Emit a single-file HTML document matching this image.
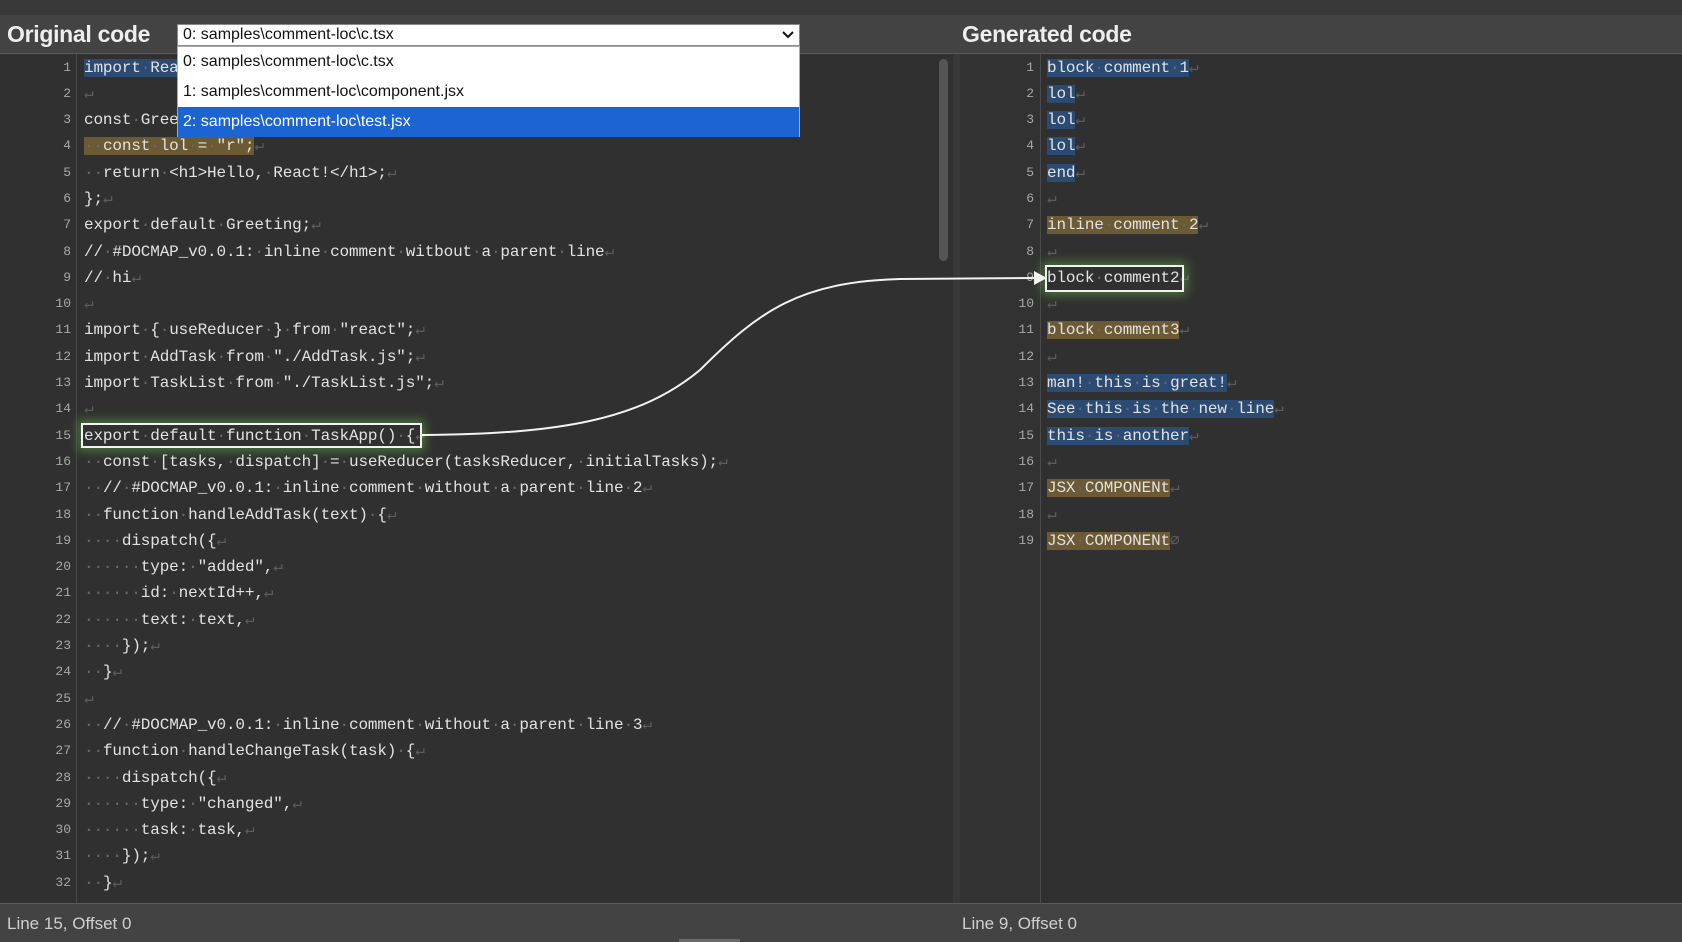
<!DOCTYPE html>
<html><head><meta charset="utf-8">
<style>
*{margin:0;padding:0;box-sizing:border-box}
body{width:1682px;height:942px;background:#303030;overflow:hidden;position:relative;font-family:"Liberation Sans",sans-serif}
.top{position:absolute;left:0;top:0;width:1682px;height:15px;background:#393939}
.hdr{position:absolute;left:0;top:15px;width:1682px;height:39px;background:#434343;border-bottom:1px solid #5a5a5a}
.title{position:absolute;top:21px;font-size:23px;font-weight:bold;color:#eee;letter-spacing:-0.3px}
.pane{position:absolute;top:54px;height:849px;background:#303030}
.gut{position:absolute;top:0;height:849px;border-right:1px solid #4a4a4a}
.code{position:absolute;top:0.5px;font-family:"Liberation Mono",monospace;font-size:16px;letter-spacing:-0.14px;line-height:26.3px;color:#e2e2e2;white-space:pre}
.nums{position:absolute;top:0.5px;font-family:"Liberation Mono",monospace;font-size:13px;line-height:26.3px;color:#a8a8a8;text-align:right;white-space:pre}
i{font-style:normal;color:#6a6a6a}
b{font-weight:normal;color:#5c5c5c}
.bl{background:#2b4b72}
.br{background:#6b5a33}
.box{position:absolute;border:2px solid #f2f2f2;box-shadow:0 0 10px 3px rgba(110,200,80,0.45)}
.status{position:absolute;left:0;top:903px;width:1682px;height:39px;background:#434343;border-top:1px solid #5a5a5a;font-size:17px;color:#cfcfcf}
.sel{position:absolute;left:177px;top:24px;width:623px;height:22px;background:#fff;border:1px solid #888;font-size:16px;color:#111;padding:0 5px;line-height:20px}
.opts{position:absolute;left:177px;top:46px;width:623px;height:91px;background:#fff;border:1px solid #aaa;font-size:16px;color:#111}
.opts div{height:30px;line-height:30px;padding-left:5px}
.opts .on{background:#1b64d1;color:#fff}
</style></head><body>
<div class="top"></div>
<div class="hdr"></div>
<div class="title" style="left:7px">Original code</div>
<div class="title" style="left:962px">Generated code</div>

<div class="pane" style="left:0;width:953px">
<div class="gut" style="left:0;width:77px"></div>
<div class="nums" style="left:0;width:71px">1
2
3
4
5
6
7
8
9
10
11
12
13
14
15
16
17
18
19
20
21
22
23
24
25
26
27
28
29
30
31
32</div>
<div class="code" style="left:84px"><span class="bl">import<i>·</i>React<i>·</i>from<i>·</i>"react";</span><b>↵</b>
<b>↵</b>
const<i>·</i>Greeting<i>·</i>=<i>·</i>()<i>·</i>=&gt;<i>·</i>{<b>↵</b>
<span class="br"><i>··</i>const<i>·</i>lol<i>·</i>=<i>·</i>"r";</span><b>↵</b>
<i>··</i>return<i>·</i>&lt;h1&gt;Hello,<i>·</i>React!&lt;/h1&gt;;<b>↵</b>
};<b>↵</b>
export<i>·</i>default<i>·</i>Greeting;<b>↵</b>
//<i>·</i>#DOCMAP_v0.0.1:<i>·</i>inline<i>·</i>comment<i>·</i>witbout<i>·</i>a<i>·</i>parent<i>·</i>line<b>↵</b>
//<i>·</i>hi<b>↵</b>
<b>↵</b>
import<i>·</i>{<i>·</i>useReducer<i>·</i>}<i>·</i>from<i>·</i>"react";<b>↵</b>
import<i>·</i>AddTask<i>·</i>from<i>·</i>"./AddTask.js";<b>↵</b>
import<i>·</i>TaskList<i>·</i>from<i>·</i>"./TaskList.js";<b>↵</b>
<b>↵</b>
export<i>·</i>default<i>·</i>function<i>·</i>TaskApp()<i>·</i>{<b>↵</b>
<i>··</i>const<i>·</i>[tasks,<i>·</i>dispatch]<i>·</i>=<i>·</i>useReducer(tasksReducer,<i>·</i>initialTasks);<b>↵</b>
<i>··</i>//<i>·</i>#DOCMAP_v0.0.1:<i>·</i>inline<i>·</i>comment<i>·</i>without<i>·</i>a<i>·</i>parent<i>·</i>line<i>·</i>2<b>↵</b>
<i>··</i>function<i>·</i>handleAddTask(text)<i>·</i>{<b>↵</b>
<i>····</i>dispatch({<b>↵</b>
<i>······</i>type:<i>·</i>"added",<b>↵</b>
<i>······</i>id:<i>·</i>nextId++,<b>↵</b>
<i>······</i>text:<i>·</i>text,<b>↵</b>
<i>····</i>});<b>↵</b>
<i>··</i>}<b>↵</b>
<b>↵</b>
<i>··</i>//<i>·</i>#DOCMAP_v0.0.1:<i>·</i>inline<i>·</i>comment<i>·</i>without<i>·</i>a<i>·</i>parent<i>·</i>line<i>·</i>3<b>↵</b>
<i>··</i>function<i>·</i>handleChangeTask(task)<i>·</i>{<b>↵</b>
<i>····</i>dispatch({<b>↵</b>
<i>······</i>type:<i>·</i>"changed",<b>↵</b>
<i>······</i>task:<i>·</i>task,<b>↵</b>
<i>····</i>});<b>↵</b>
<i>··</i>}<b>↵</b></div>
<div style="position:absolute;left:939px;top:5px;width:9px;height:202px;background:#555;border-radius:5px"></div>
</div>

<div class="pane" style="left:953px;width:729px">
<div style="position:absolute;left:0;top:0;width:7px;height:849px;background:#383838"></div>
<div class="gut" style="left:7px;width:81px;background:#323232"></div>
<div class="nums" style="left:7px;width:74px">1
2
3
4
5
6
7
8
9
10
11
12
13
14
15
16
17
18
19</div>
<div class="code" style="left:94px"><span class="bl">block<i>·</i>comment<i>·</i>1</span><b>↵</b>
<span class="bl">lol</span><b>↵</b>
<span class="bl">lol</span><b>↵</b>
<span class="bl">lol</span><b>↵</b>
<span class="bl">end</span><b>↵</b>
<b>↵</b>
<span class="br">inline<i>·</i>comment<i>·</i>2</span><b>↵</b>
<b>↵</b>
block<i>·</i>comment2<b>↵</b>
<b>↵</b>
<span class="br">block<i>·</i>comment3</span><b>↵</b>
<b>↵</b>
<span class="bl">man!<i>·</i>this<i>·</i>is<i>·</i>great!</span><b>↵</b>
<span class="bl">See<i>·</i>this<i>·</i>is<i>·</i>the<i>·</i>new<i>·</i>line</span><b>↵</b>
<span class="bl">this<i>·</i>is<i>·</i>another</span><b>↵</b>
<b>↵</b>
<span class="br">JSX<i>·</i>COMPONENt</span><b>↵</b>
<b>↵</b>
<span class="br">JSX<i>·</i>COMPONENt</span><b>∅</b></div>
</div>

<div class="box" style="left:81px;top:423px;width:341px;height:25px"></div>
<div class="box" style="left:1045px;top:265px;width:139px;height:27px"></div>

<svg style="position:absolute;left:0;top:0" width="1682" height="942">
<path d="M422 435 C 560 434, 640 420, 700 370 C 760 310, 800 282, 900 279 L 1036 278" fill="none" stroke="#f2f2f2" stroke-width="2"/>
<path d="M1034 271 L1047 278 L1034 285 Z" fill="#f2f2f2"/>
</svg>

<div class="sel">0: samples\comment-loc\c.tsx<svg style="position:absolute;right:5px;top:5px" width="12" height="10"><path d="M1 2 L6 7 L11 2" fill="none" stroke="#111" stroke-width="2"/></svg></div>
<div class="opts">
<div>0: samples\comment-loc\c.tsx</div>
<div>1: samples\comment-loc\component.jsx</div>
<div class="on">2: samples\comment-loc\test.jsx</div>
</div>

<div class="status"><span style="position:absolute;left:7px;top:10px">Line 15, Offset 0</span><span style="position:absolute;left:962px;top:10px">Line 9, Offset 0</span></div>
<div style="position:absolute;left:679px;top:939px;width:61px;height:3px;background:#6a6a6a"></div>
</body></html>
